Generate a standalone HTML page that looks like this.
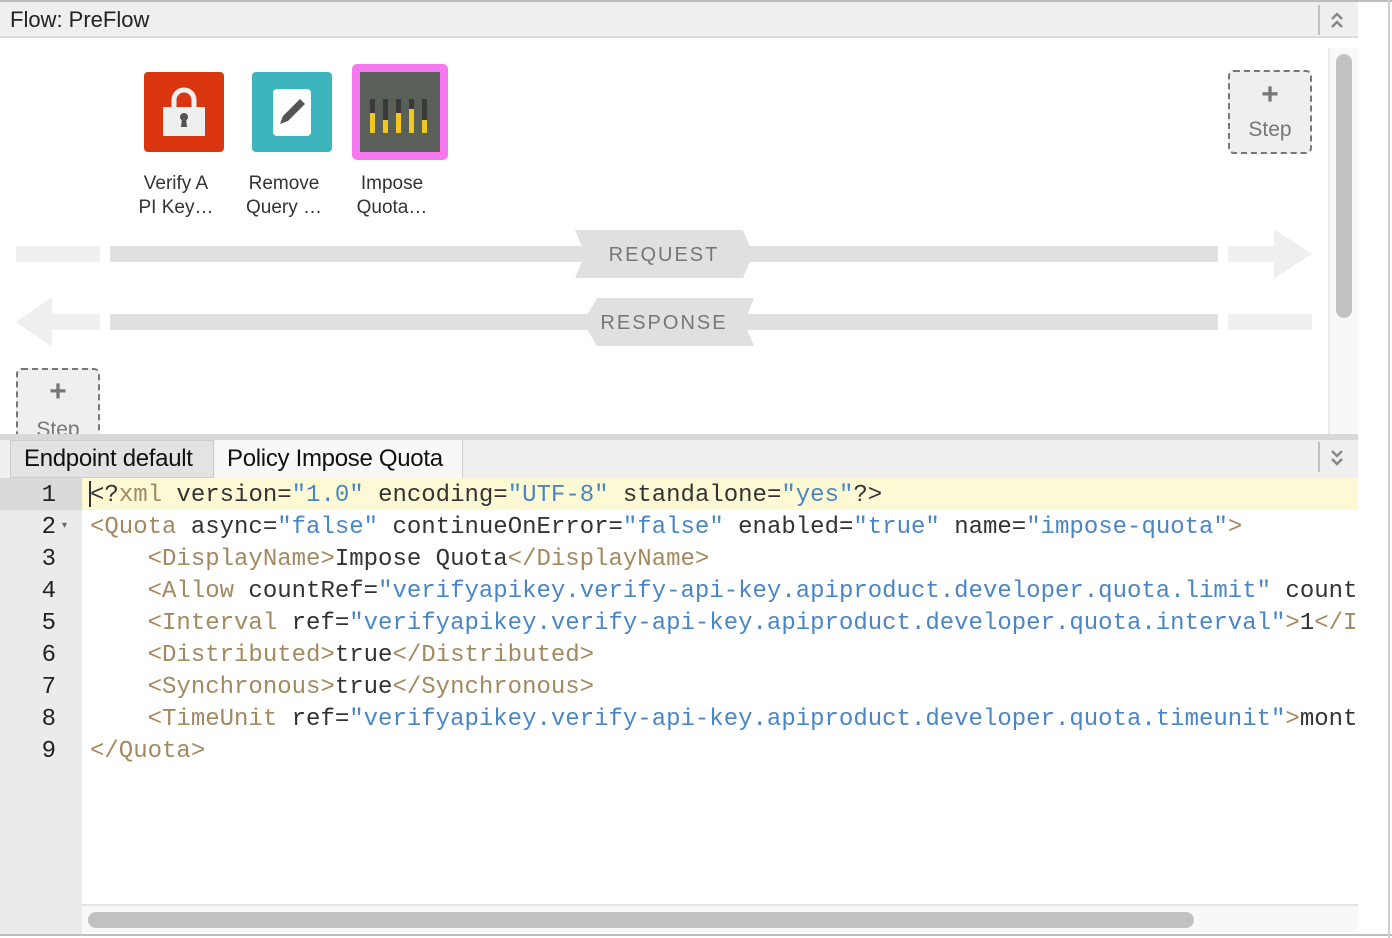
<!DOCTYPE html>
<html><head><meta charset="utf-8"><style>
*{margin:0;padding:0;box-sizing:border-box}
body{width:1392px;height:938px;background:#fff;position:relative;overflow:hidden;font-family:"Liberation Sans",Arial,sans-serif}
.a{position:absolute}
.code{font-family:"Liberation Mono",monospace;font-size:24px;line-height:32px;white-space:pre;letter-spacing:0}
.t{color:#a3895f}.s{color:#4a86c6}.k{color:#333}
.lbl{font-size:19px;color:#333;text-align:center;line-height:24px;width:100px}
</style></head><body>
<div class="a" style="left:0;top:0;width:1392px;height:2px;background:#bdbdbd"></div>
<div class="a" style="left:0;top:2px;width:1358px;height:36px;background:#efefef;border-bottom:2px solid #dcdcdc"></div>
<div class="a" style="left:10px;top:7px;font-size:22px;color:#222">Flow: PreFlow</div>
<div class="a" style="left:1318px;top:5px;width:2px;height:30px;background:#b9c3c5"></div>
<svg class="a" style="left:1329px;top:10px" width="16" height="22"><path d="M3 9l5-5 5 5M3 17l5-5 5 5" stroke="#888" stroke-width="2.5" fill="none"/></svg>

<!-- icons -->
<div class="a" style="left:144px;top:72px;width:80px;height:80px;background:#d9350f;border-radius:4px">
<svg width="80" height="80"><path d="M30 36v-8a10 10 0 0 1 20 0v8" stroke="#eee" stroke-width="5" fill="none"/><rect x="19" y="35" width="42" height="29" fill="#eef0ef"/><circle cx="40" cy="45" r="4" fill="#555"/><path d="M38 46h4l1 9h-6z" fill="#555"/></svg></div>
<div class="a" style="left:252px;top:72px;width:80px;height:80px;background:#3eb5bd;border-radius:4px">
<svg width="80" height="80"><rect x="21" y="17" width="38" height="47" rx="4" fill="#fff"/><path d="M48 27l5 5-17 17-8 3 3-8z" fill="#555"/></svg></div>
<div class="a" style="left:352px;top:64px;width:96px;height:96px;background:#f578f1;border-radius:5px">
<div class="a" style="left:8px;top:8px;width:80px;height:80px;background:#596059">
<svg width="80" height="80"><g fill="#3a3a3a"><rect x="10" y="27" width="5" height="34"/><rect x="23" y="27" width="5" height="34"/><rect x="36" y="27" width="5" height="34"/><rect x="49" y="27" width="5" height="34"/><rect x="62" y="27" width="5" height="34"/></g><g fill="#f3c81e"><rect x="10" y="41" width="5" height="20"/><rect x="23" y="48" width="5" height="13"/><rect x="36" y="41" width="5" height="20"/><rect x="49" y="37" width="5" height="24"/><rect x="62" y="48" width="5" height="13"/></g></svg></div></div>
<div class="a lbl" style="left:126px;top:172px">Verify A<br>PI Key…</div>
<div class="a lbl" style="left:234px;top:172px">Remove<br>Query …</div>
<div class="a lbl" style="left:342px;top:172px">Impose<br>Quota…</div>

<!-- step buttons -->
<div class="a" style="left:1228px;top:70px;width:84px;height:84px;border:2px dashed #777;border-radius:6px;background:#efefef;text-align:center;color:#777">
<div style="font-size:30px;line-height:30px;margin-top:8px;font-weight:bold">+</div><div style="font-size:21px;margin-top:8px">Step</div></div>
<div class="a" style="left:16px;top:368px;width:84px;height:80px;border:2px dashed #777;border-radius:6px;background:#efefef;text-align:center;color:#777">
<div style="font-size:30px;line-height:30px;margin-top:7px;font-weight:bold">+</div><div style="font-size:21px;margin-top:11px">Step</div></div>

<!-- flows -->
<div class="a" style="left:16px;top:246px;width:84px;height:16px;background:#efefef"></div>
<div class="a" style="left:110px;top:246px;width:1108px;height:16px;background:#e0e0e0"></div>
<svg class="a" style="left:1228px;top:229px" width="86" height="50"><path d="M0 17h46V0l38 25-38 25V33H0z" fill="#efefef"/></svg>
<svg class="a" style="left:570px;top:229px" width="190" height="50"><path d="M5 1h168l10 24-10 24H5l10-24z" fill="#e0e0e0"/></svg>
<div class="a" style="left:575px;top:244px;width:178px;text-align:center;font-size:20px;letter-spacing:2px;color:#777">REQUEST</div>

<svg class="a" style="left:16px;top:297px" width="86" height="50"><path d="M84 17H36V0L0 25l36 25V33h48z" fill="#efefef"/></svg>
<div class="a" style="left:110px;top:314px;width:1108px;height:16px;background:#e0e0e0"></div>
<div class="a" style="left:1228px;top:314px;width:84px;height:16px;background:#efefef"></div>
<svg class="a" style="left:578px;top:297px" width="180" height="50"><path d="M19 1h157l-10 24 10 24H19L5 25z" fill="#e0e0e0"/></svg>
<div class="a" style="left:580px;top:312px;width:168px;text-align:center;font-size:20px;letter-spacing:2px;color:#777">RESPONSE</div>

<!-- vertical scrollbar -->
<div class="a" style="left:1328px;top:48px;width:30px;height:386px;background:#f8f8f8;border-left:2px solid #ececec"></div>
<div class="a" style="left:1336px;top:54px;width:16px;height:264px;background:#c1c1c1;border-radius:8px"></div>

<!-- tab bar -->
<div class="a" style="left:0;top:434px;width:1358px;height:6px;background:#d8d8d8"></div>
<div class="a" style="left:0;top:440px;width:1358px;height:38px;background:#efefef"></div>
<div class="a" style="left:10px;top:440px;width:204px;height:38px;background:#e3e3e3;border:1px solid #ccc"></div>
<div class="a" style="left:24px;top:445px;font-size:24px;color:#111;letter-spacing:-0.3px">Endpoint default</div>
<div class="a" style="left:215px;top:440px;width:248px;height:38px;background:#f8f8f8;border-right:1px solid #ccc"></div>
<div class="a" style="left:227px;top:445px;font-size:24px;color:#111;letter-spacing:-0.3px">Policy Impose Quota</div>
<div class="a" style="left:1318px;top:442px;width:2px;height:30px;background:#b9c3c5"></div>
<svg class="a" style="left:1329px;top:446px" width="16" height="24"><path d="M3 5l5 5 5-5M3 13l5 5 5-5" stroke="#888" stroke-width="2.5" fill="none"/></svg>

<!-- editor -->
<div class="a" style="left:0;top:478px;width:82px;height:456px;background:#ebebeb"></div>
<div class="a" style="left:0;top:478px;width:82px;height:32px;background:#dadada"></div>
<div class="a" style="left:82px;top:478px;width:1276px;height:32px;background:#fef9d5"></div>
<div class="a" style="left:89px;top:481px;width:2px;height:26px;background:#333"></div>
<div class="a code" style="left:0;top:480px;width:56px;text-align:right;color:#222">1
2
3
4
5
6
7
8
9</div>
<div class="a" style="left:62px;top:520px;font-size:10px;color:#666">▾</div>
<div class="a code" style="left:90px;top:480px;width:1268px;overflow:hidden"><span class="k">&lt;?</span><span class="t">xml</span><span class="k"> version=</span><span class="s">"1.0"</span><span class="k"> encoding=</span><span class="s">"UTF-8"</span><span class="k"> standalone=</span><span class="s">"yes"</span><span class="k">?&gt;</span>
<span class="t">&lt;Quota</span><span class="k"> async=</span><span class="s">"false"</span><span class="k"> continueOnError=</span><span class="s">"false"</span><span class="k"> enabled=</span><span class="s">"true"</span><span class="k"> name=</span><span class="s">"impose-quota"</span><span class="t">&gt;</span>
    <span class="t">&lt;DisplayName&gt;</span><span class="k">Impose Quota</span><span class="t">&lt;/DisplayName&gt;</span>
    <span class="t">&lt;Allow</span><span class="k"> countRef=</span><span class="s">"verifyapikey.verify-api-key.apiproduct.developer.quota.limit"</span><span class="k"> count</span>
    <span class="t">&lt;Interval</span><span class="k"> ref=</span><span class="s">"verifyapikey.verify-api-key.apiproduct.developer.quota.interval"</span><span class="t">&gt;</span><span class="k">1</span><span class="t">&lt;/I</span>
    <span class="t">&lt;Distributed&gt;</span><span class="k">true</span><span class="t">&lt;/Distributed&gt;</span>
    <span class="t">&lt;Synchronous&gt;</span><span class="k">true</span><span class="t">&lt;/Synchronous&gt;</span>
    <span class="t">&lt;TimeUnit</span><span class="k"> ref=</span><span class="s">"verifyapikey.verify-api-key.apiproduct.developer.quota.timeunit"</span><span class="t">&gt;</span><span class="k">mont</span>
<span class="t">&lt;/Quota&gt;</span></div>

<!-- h scrollbar -->
<div class="a" style="left:82px;top:904px;width:1276px;height:2px;background:#e6e6e6"></div>
<div class="a" style="left:82px;top:906px;width:1276px;height:26px;background:#f8f8f8"></div>
<div class="a" style="left:88px;top:912px;width:1106px;height:16px;background:#c1c1c1;border-radius:8px"></div>
<div class="a" style="left:0;top:934px;width:1392px;height:2px;background:#bdbdbd"></div>
<div class="a" style="left:1388px;top:0;width:2px;height:938px;background:#d0d0d0"></div>
</body></html>
